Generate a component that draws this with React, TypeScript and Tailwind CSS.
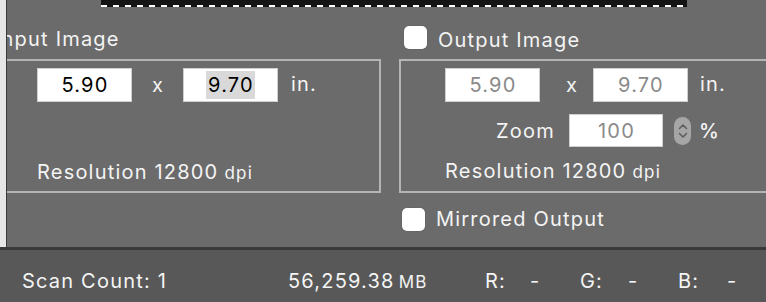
import React from "react";

const font = { fontFamily: "Inter, 'Liberation Sans', sans-serif" };

const Field: React.FC<{ value: string; dim?: boolean; selected?: boolean; className?: string }> = ({
  value,
  dim,
  selected,
  className = "w-[95px] h-[34px]",
}) => (
  <div className={`bg-white border border-[#cfcfcf] flex items-center justify-center ${className}`}>
    <span
      className={`text-[20px] tracking-[1.2px] leading-[28px] pl-[2px] pr-[1px] ${
        dim ? "text-[#8a8a8a]" : "text-black"
      } ${selected ? "bg-[#d9d9d9]" : ""}`}
    >
      {value}
    </span>
  </div>
);

const Check: React.FC = () => (
  <div className="w-[23px] h-[23px] rounded-[5px] bg-white shadow-[0_0_1px_rgba(0,0,0,0.4)]" />
);

const App: React.FC = () => {
  return (
    <div
      className="w-[766px] h-[302px] flex flex-col overflow-hidden bg-[#6b6b6b] text-[#f4f4f4] text-[20px] tracking-[1.2px]"
      style={font}
    >
      {/* main panel */}
      <div className="h-[247px] flex">
        <div className="w-[6px] bg-[#e6e6e6]" />
        <div className="flex-1 relative border-l-[1px] border-[#3a3a3a] overflow-hidden">
          {/* preview edge */}
          <div className="absolute top-0 left-[94px] w-[586px] h-[7px] bg-[#141414] flex items-end">
            <div className="w-full h-[2px] bg-[repeating-linear-gradient(90deg,#ffffff_0px,#ffffff_6px,#141414_6px,#141414_12px)]" />
          </div>

          <div className="flex pt-[26px]">
            {/* input side */}
            <div className="w-[374px] flex flex-col">
              <div className="h-[33px] leading-[26px] -ml-[12px] whitespace-nowrap">Input Image</div>
              <div className="h-[134px] border-t-2 border-r-2 border-b-2 border-[#b4b4b4] flex flex-col">
                <div className="flex items-center pt-[7px] pl-[30px]">
                  <Field value="5.90" />
                  <span className="ml-[20px] w-[31px]">x</span>
                  <Field value="9.70" selected />
                  <span className="ml-[13px] -mt-[3px]">in.</span>
                </div>
                <div className="mt-[55px] pl-[30px] flex items-baseline">
                  <span>Resolution 12800</span>
                  <span className="text-[17px] ml-[6px]">dpi</span>
                </div>
              </div>
            </div>

            {/* output side */}
            <div className="flex-1 flex flex-col ml-[18px]">
              <div className="h-[33px] flex items-start gap-[11px] pl-[5px]">
                <Check />
                <span className="leading-[26px] pt-[1px]">Output Image</span>
              </div>
              <div className="h-[134px] border-t-2 border-l-2 border-b-2 border-[#b4b4b4] -mr-[4px] flex flex-col">
                <div className="flex items-center pt-[7px] pl-[44px]">
                  <Field value="5.90" dim />
                  <span className="ml-[26px] w-[27px]">x</span>
                  <Field value="9.70" dim />
                  <span className="ml-[12px] -mt-[3px]">in.</span>
                </div>
                <div className="flex items-center mt-[12px] pl-[95px]">
                  <span className="w-[73px]">Zoom</span>
                  <Field value="100" dim className="w-[94px] h-[33px]" />
                  <div className="ml-[11px] w-[17px] h-[28px] rounded-full bg-[#a6a6a6] flex flex-col items-center justify-center gap-[2px]">
                    <svg width="10" height="7" viewBox="0 0 10 7">
                      <path d="M1.5 5.5 L5 2 L8.5 5.5" fill="none" stroke="#5c5c5c" strokeWidth="1.5" strokeLinecap="round" />
                    </svg>
                    <svg width="10" height="7" viewBox="0 0 10 7">
                      <path d="M1.5 1.5 L5 5 L8.5 1.5" fill="none" stroke="#5c5c5c" strokeWidth="1.5" strokeLinecap="round" />
                    </svg>
                  </div>
                  <span className="ml-[8px] font-medium">%</span>
                </div>
                <div className="mt-[9px] pl-[44px] flex items-baseline">
                  <span>Resolution 12800</span>
                  <span className="text-[17px] ml-[6px]">dpi</span>
                </div>
              </div>
              <div className="flex items-center gap-[11px] mt-[13px] pl-[3px]">
                <Check />
                <span className="leading-[26px]">Mirrored Output</span>
              </div>
            </div>
          </div>
        </div>
      </div>

      {/* status bar */}
      <div className="flex-1 border-t-[3px] border-[#3a3a3a] bg-[#585858] flex items-start text-[20px] pl-[22px] pt-[16px]">
        <span className="w-[266px]">Scan Count: 1</span>
        <span className="flex items-baseline w-[197px]">
          56,259.38<span className="text-[17px] ml-[4px]">MB</span>
        </span>
        <span className="w-[45px]">R:</span>
        <span className="w-[50px]">-</span>
        <span className="w-[48px]">G:</span>
        <span className="w-[50px]">-</span>
        <span className="w-[49px]">B:</span>
        <span>-</span>
      </div>
    </div>
  );
};

export default App;
